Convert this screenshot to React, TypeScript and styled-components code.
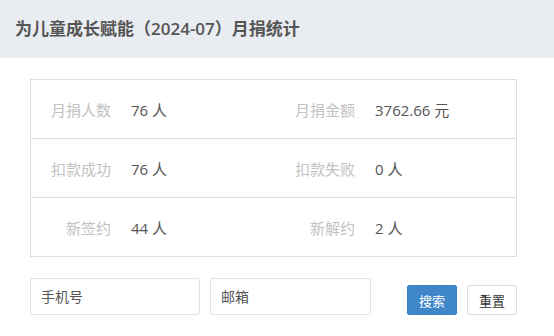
import styled, { createGlobalStyle } from "styled-components"

const GlobalStyle = createGlobalStyle`
  html, body {
    margin: 0;
    padding: 0;
    background: #fff;
    font-family: "Open Sans", "Noto Sans CJK SC", sans-serif;
  }
  * { box-sizing: border-box; }
`

const stats = [
  { label: "月捐人数", value: "76 人", label2: "月捐金额", value2: "3762.66 元" },
  { label: "扣款成功", value: "76 人", label2: "扣款失败", value2: "0 人" },
  { label: "新签约", value: "44 人", label2: "新解约", value2: "2 人" },
]

const App = () => {
  return (
    <Page>
      <GlobalStyle />
      <Header>
        <Title>为儿童成长赋能（2024-07）月捐统计</Title>
      </Header>
      <Content>
        <StatTable>
          {stats.map((row, index) => (
            <Row key={index} $last={index === stats.length - 1}>
              <Label>{row.label}</Label>
              <Value>{row.value}</Value>
              <Label>{row.label2}</Label>
              <Value>{row.value2}</Value>
            </Row>
          ))}
        </StatTable>
        <Form>
          <Input placeholder="手机号" $width={170} />
          <Input placeholder="邮箱" $width={161} />
          <Buttons>
            <Button $primary>搜索</Button>
            <Button>重置</Button>
          </Buttons>
        </Form>
      </Content>
    </Page>
  )
}

const Page = styled.div`
  width: 554px;
  min-height: 336px;
`
const Header = styled.div`
  height: 58px;
  background: #e9ecf0;
  display: flex;
  align-items: center;
  padding: 0 15px 4px;
`
const Title = styled.h3`
  margin: 0;
  font-size: 17px;
  font-weight: 600;
  color: #555;
`
const Content = styled.div`
  padding: 21px 37px 0 30px;
`
const StatTable = styled.div`
  border: 1px solid #ddd;
`
const Row = styled.div<{ $last?: boolean }>`
  display: grid;
  grid-template-columns: 80px 162px 82px 1fr;
  height: ${(p) => (p.$last ? "58px" : "59px")};
  align-items: center;
  border-bottom: ${(p) => (p.$last ? "none" : "1px solid #ddd")};
  font-size: 15px;
`
const Label = styled.div`
  text-align: right;
  color: #c2c2c2;
`
const Value = styled.div`
  padding-left: 20px;
  color: #555;
`
const Form = styled.div`
  display: flex;
  align-items: flex-end;
  gap: 10px;
  margin-top: 21px;
`
const Input = styled.input<{ $width: number }>`
  width: ${(p) => p.$width}px;
  height: 37px;
  border: 1px solid #e3e3e3;
  border-radius: 2px;
  padding: 0 10px;
  font-family: inherit;
  font-size: 14px;
  color: #555;
  outline: none;
  &::placeholder {
    color: #555;
  }
`
const Buttons = styled.div`
  display: flex;
  gap: 10px;
  margin-left: 26px;
`
const Button = styled.button<{ $primary?: boolean }>`
  width: 50px;
  height: 30px;
  border-radius: 2px;
  font-family: inherit;
  font-size: 13px;
  padding: 0;
  cursor: pointer;
  border: 1px solid ${(p) => (p.$primary ? "#3b82c4" : "#ddd")};
  background: ${(p) => (p.$primary ? "#3f87c9" : "#fff")};
  color: ${(p) => (p.$primary ? "#fff" : "#333")};
`

export default App
